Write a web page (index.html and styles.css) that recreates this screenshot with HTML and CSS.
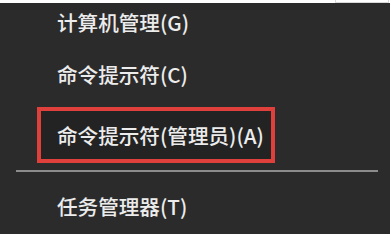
FILE: index.html
```html
<!DOCTYPE html>
<html lang="zh-CN">
<head>
<meta charset="utf-8">
<link rel="stylesheet" href="styles.css">
</head>
<body>
<div class="topbar"><div class="topbox"></div></div>
<div class="menu">
  <div class="item first">计算机管理(G)</div>
  <div class="item second">命令提示符(C)</div>
  <div class="item selected">命令提示符(管理员)(A)</div>
  <div class="sep"></div>
  <div class="item last">任务管理器(T)</div>
</div>
</body>
</html>
```
FILE: styles.css
```css
html, body {
  margin: 0;
  padding: 0;
  background: #ffffff;
}
body {
  width: 391px;
  height: 234px;
  overflow: hidden;
  font-family: "Noto Sans CJK SC", "Noto Sans", sans-serif;
}
.topbar {
  height: 3px;
  display: flex;
  justify-content: flex-end;
  padding-right: 2px;
}
.topbox {
  width: 52px;
  height: 2px;
  border: 1px solid #d8d8d8;
  border-top: none;
  background: #fff;
}
.menu {
  width: 390px;
  height: 231px;
  background: #2b2b2b;
  display: flex;
  flex-direction: column;
}
.item {
  color: #ececec;
  font-size: 20.6px;
  font-weight: 500;
  display: flex;
  align-items: center;
  padding-left: 57px;
  height: 56px;
  flex-shrink: 0;
  white-space: nowrap;
}
.item.first {
  height: 37px;
}
.item.second {
  height: 67px;
}
.item.selected {
  margin-left: 37px;
  width: 214px;
  height: 48px;
  padding-left: 16px;
  border: 4px solid #e0403c;
  background: #232323;
  box-sizing: content-box;
}
.item.last {
  height: 56px;
}
.sep {
  height: 2px;
  margin: 7px 12px 6px 16px;
  background: #8c8c8c;
  flex-shrink: 0;
}
```
